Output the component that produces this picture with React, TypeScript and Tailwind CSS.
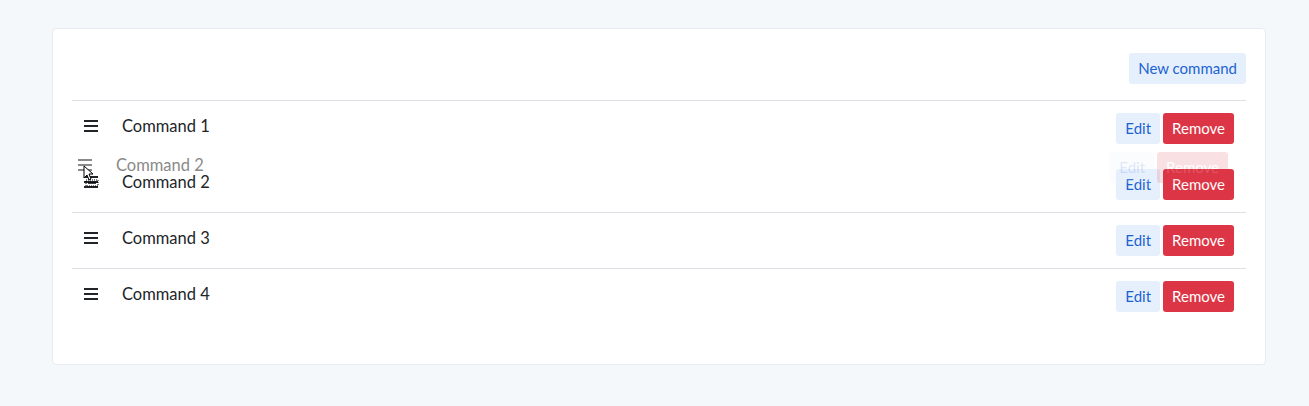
import React from "react";

const COMMANDS = ["Command 1", "Command 2", "Command 3", "Command 4"];

function Grip({ faded }: { faded?: boolean }) {
  const bar = faded ? "bg-[#8a8a8a]" : "bg-[#212529]";
  return (
    <div className="flex flex-col gap-[3px] w-[14px]">
      <span className={`block h-[2px] w-[14px] ${bar}`} />
      <span className={`block h-[2px] w-[14px] ${bar}`} />
      <span className={`block h-[2px] w-[14px] ${bar}`} />
    </div>
  );
}

function RowButtons() {
  return (
    <div className="flex gap-[3px]">
      <button className="h-[31px] px-[9px] rounded-[3px] bg-[#e6f0fd] text-[#1c63d1] text-[15px]">
        Edit
      </button>
      <button className="h-[31px] px-[9px] rounded-[3px] bg-[#dc3545] text-white text-[15px]">
        Remove
      </button>
    </div>
  );
}

// the row being dragged loses its visible top border
function Row({ name, index }: { name: string; index: number }) {
  const border =
    index === 0 ? "" : index === 1 ? "border-t border-transparent" : "border-t border-[#dee2e6]";
  return (
    <div className={`flex items-start justify-between pl-3 pr-3 py-3 ${border}`}>
      <div className="flex items-center h-[26px]">
        <Grip />
        <span className="ml-[24px] text-[16.5px] text-[#212529]">{name}</span>
      </div>
      <RowButtons />
    </div>
  );
}

export default function App() {
  return (
    <div
      className="min-h-[406px] bg-[#f5f8fb] pl-[52px] pr-[43px] pt-[28px]"
      style={{ fontFamily: "'Source Sans Pro', Lato, 'Liberation Sans', sans-serif" }}
    >
      <div className="bg-white border border-[#e6ebf1] rounded-[4px] px-[19px] pt-6 pb-[40px]">
        <div className="flex justify-end pb-4">
          <button className="h-[31px] px-[9px] rounded-[3px] bg-[#e6f0fd] text-[#1c63d1] text-[15px]">
            New command
          </button>
        </div>
        <div className="border-t border-[#dee2e6]">
          {COMMANDS.map((c, i) => (
            <div key={c} className="relative">
              <Row name={c} index={i} />
              {i === 1 && (
                <div className="absolute left-[-6px] right-[6px] top-[-16px] pointer-events-none flex items-start justify-between pl-3 pr-3 py-3">
                  <div className="flex items-center h-[26px]">
                    <Grip faded />
                    <span className="ml-[24px] text-[16.5px] text-[#8a8a8a]">{c}</span>
                  </div>
                  <div className="opacity-15">
                    <RowButtons />
                  </div>
                  <svg
                    className="absolute left-[17px] top-[25px]"
                    width="20"
                    height="22"
                    viewBox="0 0 20 22"
                  >
                    <path d="M1 1 L1 13 L4 10 L6 15 L8 14 L6 9 L10 9 Z" fill="white" stroke="black" strokeWidth="1" />
                    <rect x="3" y="15" width="12" height="6" fill="none" stroke="black" strokeDasharray="1 1" />
                    <line x1="5" y1="18" x2="13" y2="18" stroke="black" strokeWidth="1.5" />
                  </svg>
                </div>
              )}
            </div>
          ))}
        </div>
      </div>
    </div>
  );
}
